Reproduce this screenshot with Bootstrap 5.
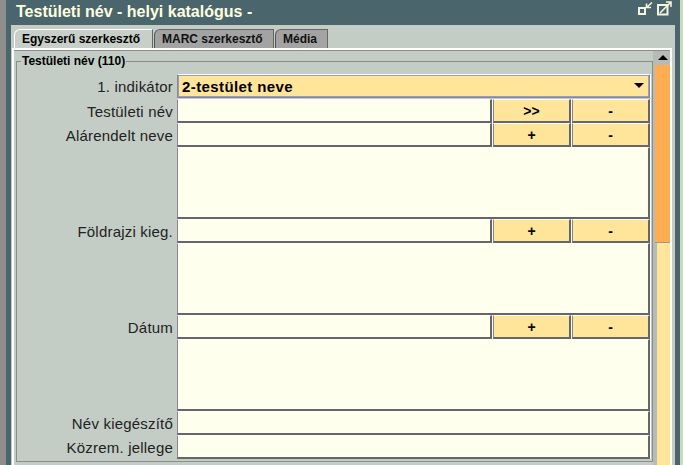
<!DOCTYPE html>
<html lang="en">
<head>
    <meta charset="UTF-8">
    <meta name="viewport" content="width=device-width, initial-scale=1.0">
    <title>Testületi név</title>
    <link href="https://cdn.jsdelivr.net/npm/bootstrap@5.3.0/dist/css/bootstrap.min.css" rel="stylesheet">
    <style>
        html, body { height: 465px; overflow: hidden; }
        body { background: #cdd9bd; font-family: "Liberation Sans", Arial, sans-serif; color: #000; }
        .page-wrap { width: 683px; height: 465px; border-left: 6px solid #8e8e8e; border-right: 3px solid #cdd9bd; }
        .win { height: 465px; background: #4a666c; padding: 0 5px; }
        .win-title { height: 25px; padding-left: 5px; color: #ffffe0; font-size: 16px; font-weight: 700; line-height: 24px; }
        .win-icons { gap: 3px; padding-top: 1px; margin-right: 3px; }
        .win-body { background: #c4cdc5; height: 440px; padding: 4px 3px 0 1px; overflow: hidden; }

        /* tabs */
        .tab-row { height: 19px; padding-left: 2px; gap: 1px; }
        .tab-item { font-size: 12px; font-weight: 700; height: 19px; line-height: 18px; padding-left: 7px; border: 1px solid #666; border-bottom: 0; border-left-color: #555; border-radius: 6px 0 0 0; background: #a3a3a3; color: #111; }
        .tab-item.is-on { background: #c8cfc9; border-color: #fff #666 transparent #fff; color: #000; }
        .tab-one { width: 139px; }
        .tab-two { width: 120px; }
        .tab-three { width: 53px; }

        /* frame under the tabs */
        .tab-frame { border-left: 2px solid #fff; border-top: 2px solid #fff; border-right: 2px solid #fff; height: 420px; }
        .tab-inner { border-top: 1px solid #8c8c8c; height: 418px; padding-left: 2px; }
        .field-box { width: 637px; margin: 4px 0 0 0; padding: 0 1px 2px 0; border: 1px solid #8c8c8c; min-width: 0; align-self: flex-start; flex: none; }
        .field-box legend { float: none; width: auto; margin: 0 0 0 4px; padding: 0 1px; font-size: 12px; font-weight: 700; line-height: 13px; }
        .form-rows { display: grid; grid-template-columns: 160px 316px 79px 79px; padding-top: 6px; }
        .row-label { height: 24px; padding: 2px 4px 0 0; text-align: right; font-size: 15px; line-height: 21px; color: #222; letter-spacing: .2px; white-space: nowrap; }

        /* cells: white top, dark right and bottom edge */
        .cell-box { display: block; height: 24px; margin-right: 1px; padding: 0 3px; border-style: solid; border-width: 1px 2px 2px 1px; border-color: #fff #666 #666 #888; border-radius: 0; box-shadow: 1px 0 0 #fff; background: #ffffee; }
        .cell-box:focus { outline: 0; }
        .cell-wide { grid-column: 2 / 5; }
        .cell-tall { height: 72px; grid-column: 2 / 5; resize: none; }
        .cell-btn { background: #ffe599; padding: 0; font-size: 14px; font-weight: 700; line-height: 20px; text-align: center; }

        .sel-wrap { position: relative; }
        .sel-main { width: calc(100% - 1px); height: 24px; padding: 1px 4px 0 4px; border: 1px solid #888; border-top-color: #fff; box-shadow: inset 0 0 0 1px #9a9ad0, 1px 0 0 #fff; background: #ffe599; font-size: 15px; font-weight: 700; letter-spacing: .4px; appearance: none; border-radius: 0; }
        .sel-arrow { position: absolute; right: 7px; top: 9px; width: 0; height: 0; border-left: 5px solid transparent; border-right: 5px solid transparent; border-top: 5px solid #000; }

        /* scrollbar */
        .scroll-col { width: 17px; height: 417px; flex: none; border-left: 2px solid #b4bcb5; }
        .scroll-up { height: 14px; background: #b4bcb5; padding-top: 4px; }
        .scroll-up div { width: 0; height: 0; margin: 0 auto; border-left: 5px solid transparent; border-right: 5px solid transparent; border-bottom: 5px solid #000; }
        .scroll-thumb { height: 178px; background: #ffad52; border-bottom: 1px solid #999; }
        .scroll-track { height: 225px; background: #ffe599; border-left: 2px solid #b4bcb5; }
    </style>
</head>
<body>
<div class="page-wrap">
    <div class="win">
        <div class="d-flex justify-content-between">
            <div class="win-title">Testületi név - helyi katalógus -</div>
            <div class="d-flex align-items-start win-icons">
                <svg width="16" height="15" viewBox="0 0 16 15" fill="none" stroke="#f4f4dc">
                    <rect x="1" y="7" width="6" height="6" stroke-width="2"/>
                    <path d="M14 1.5 8.5 6.5M8.5 2.5v4h4.5" stroke-width="1.6"/>
                </svg>
                <svg width="15" height="15" viewBox="0 0 15 15" fill="none" stroke="#f4f4dc">
                    <rect x="1" y="4" width="9.5" height="9.5" stroke-width="2"/>
                    <path d="M3 12 14 1M9 1h5v5" stroke-width="1.6"/>
                </svg>
            </div>
        </div>
        <div class="win-body">
            <div class="d-flex tab-row">
                <div class="tab-item is-on tab-one">Egyszerű szerkesztő</div>
                <div class="tab-item tab-two">MARC szerkesztő</div>
                <div class="tab-item tab-three">Média</div>
            </div>
            <div class="tab-frame">
                <div class="d-flex tab-inner">
                    <fieldset class="field-box">
                        <legend>Testületi név (110)</legend>
                        <div class="form-rows">
                            <div class="row-label">1. indikátor</div>
                            <div class="sel-wrap cell-wide">
                                <select class="sel-main"><option>2-testület neve</option></select>
                                <div class="sel-arrow"></div>
                            </div>

                            <div class="row-label">Testületi név</div>
                            <input class="cell-box" type="text">
                            <button class="cell-box cell-btn" type="button">&gt;&gt;</button>
                            <button class="cell-box cell-btn" type="button">-</button>

                            <div class="row-label">Alárendelt neve</div>
                            <input class="cell-box" type="text">
                            <button class="cell-box cell-btn" type="button">+</button>
                            <button class="cell-box cell-btn" type="button">-</button>

                            <div></div>
                            <textarea class="cell-box cell-tall"></textarea>

                            <div class="row-label">Földrajzi kieg.</div>
                            <input class="cell-box" type="text">
                            <button class="cell-box cell-btn" type="button">+</button>
                            <button class="cell-box cell-btn" type="button">-</button>

                            <div></div>
                            <textarea class="cell-box cell-tall"></textarea>

                            <div class="row-label">Dátum</div>
                            <input class="cell-box" type="text">
                            <button class="cell-box cell-btn" type="button">+</button>
                            <button class="cell-box cell-btn" type="button">-</button>

                            <div></div>
                            <textarea class="cell-box cell-tall"></textarea>

                            <div class="row-label">Név kiegészítő</div>
                            <input class="cell-box cell-wide" type="text">

                            <div class="row-label">Közrem. jellege</div>
                            <input class="cell-box cell-wide" type="text">
                        </div>
                    </fieldset>
                    <div class="scroll-col">
                        <div class="scroll-up"><div></div></div>
                        <div class="scroll-thumb"></div>
                        <div class="scroll-track"></div>
                    </div>
                </div>
            </div>
        </div>
    </div>
</div>
</body>
</html>
